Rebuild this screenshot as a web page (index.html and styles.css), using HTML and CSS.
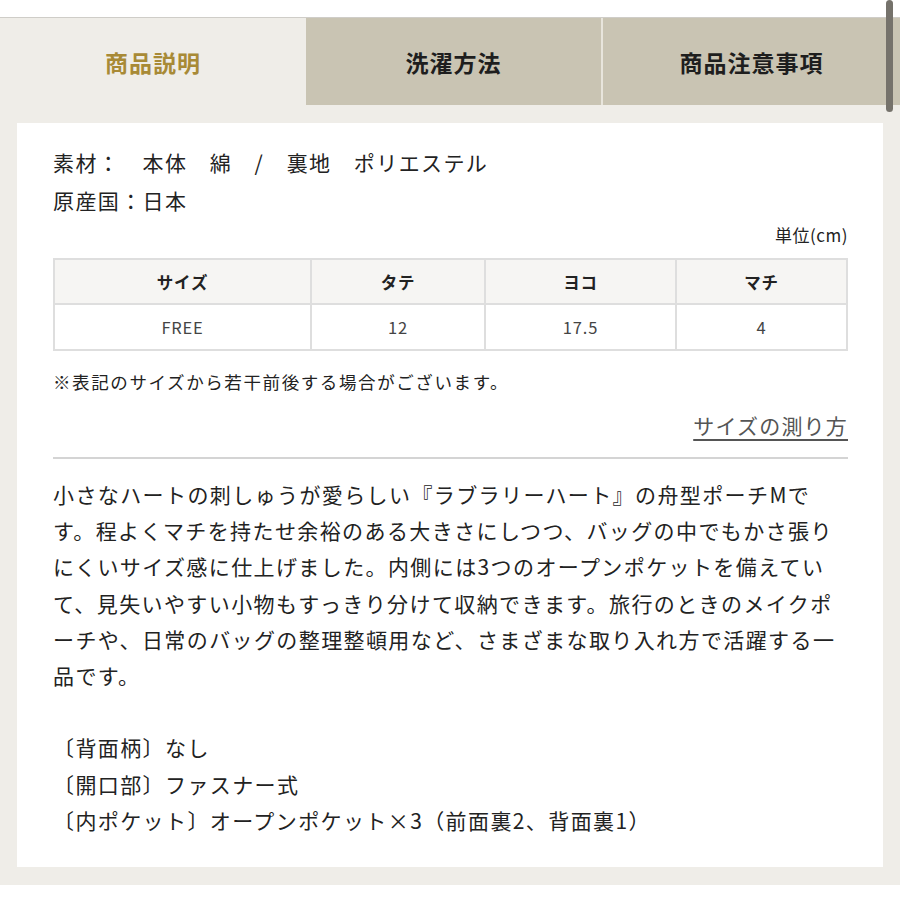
FILE: index.html
```html
<!DOCTYPE html>
<html lang="ja">
<head>
<meta charset="utf-8">
<title>商品説明</title>
<link rel="stylesheet" href="styles.css">
</head>
<body>
<div class="page">
  <div class="panel">
    <div class="tabs">
      <div class="tab tab-active">商品説明</div>
      <div class="tab">洗濯方法</div>
      <div class="tab tab-last">商品注意事項</div>
    </div>
    <div class="card">
      <div class="spec">
        <p>素材：　本体　綿　/　裏地　ポリエステル</p>
        <p>原産国：日本</p>
      </div>
      <p class="unit">単位(cm)</p>
      <table class="size-table">
        <thead>
          <tr><th class="c1">サイズ</th><th class="c2">タテ</th><th class="c3">ヨコ</th><th class="c4">マチ</th></tr>
        </thead>
        <tbody>
          <tr><td>FREE</td><td>12</td><td>17.5</td><td>4</td></tr>
        </tbody>
      </table>
      <p class="note">※表記のサイズから若干前後する場合がございます。</p>
      <div class="link-row"><a class="measure" href="#">サイズの測り方</a></div>
      <hr class="divider">
      <p class="desc">小さなハートの刺しゅうが愛らしい『ラブラリーハート』の舟型ポーチMで<br>す。程よくマチを持たせ余裕のある大きさにしつつ、バッグの中でもかさ張り<br>にくいサイズ感に仕上げました。内側には3つのオープンポケットを備えてい<br>て、見失いやすい小物もすっきり分けて収納できます。旅行のときのメイクポ<br>ーチや、日常のバッグの整理整頓用など、さまざまな取り入れ方で活躍する一<br>品です。<br><br>〔背面柄〕なし<br>〔開口部〕ファスナー式<br>〔内ポケット〕オープンポケット×3（前面裏2、背面裏1）</p>
    </div>
  </div>
  <div class="scrollbar"></div>
</div>
</body>
</html>
```

FILE: styles.css
```css
* { box-sizing: border-box; }
html, body {
  margin: 0;
  padding: 0;
  background: #ffffff;
}
body {
  font-family: "Noto Sans CJK JP", "Noto Sans", sans-serif;
  color: #222222;
}
p { margin: 0; }

.page {
  position: relative;
  width: 900px;
  padding-top: 17px;
}
.panel {
  background: #efede8;
  border-top: 1px solid #cfcdc8;
  padding-bottom: 18px;
}
.tabs {
  display: grid;
  grid-template-columns: 306px 295px 1fr;
  height: 87px;
}
.tab {
  display: flex;
  align-items: center;
  justify-content: center;
  background: #c9c4b3;
  font-size: 23px;
  font-weight: 700;
  letter-spacing: 1px;
  color: #1e1e1e;
}
.tab-active {
  background: #efede8;
  color: #a88a36;
}
.tab-last {
  border-left: 2px solid #e8e5dc;
}

.card {
  background: #ffffff;
  margin: 18px 17px 0 17px;
  padding: 20px 35px 29px 36px;
}
.spec p {
  font-size: 21px;
  line-height: 38px;
  letter-spacing: 1.4px;
}
.unit {
  text-align: right;
  font-size: 17px;
  line-height: 24px;
  margin-top: 4px;
  letter-spacing: 0.5px;
}
.size-table {
  width: 100%;
  margin-top: 11px;
  border-collapse: collapse;
  border: 2px solid #dedede;
}
.size-table th, .size-table td {
  border: 2px solid #dedede;
  text-align: center;
  font-size: 16px;
  letter-spacing: 0.8px;
}
.size-table th {
  background: #f6f5f3;
  font-weight: 700;
  height: 45px;
  color: #222;
  font-size: 16.5px;
}
.size-table td {
  height: 46px;
  color: #444;
  font-size: 16.5px;
}
.c1 { width: 257px; }
.c2 { width: 174px; }
.c3 { width: 191px; }

.note {
  margin-top: 18px;
  font-size: 17.5px;
  line-height: 26px;
  letter-spacing: 1.6px;
}
.link-row {
  margin-top: 15px;
  text-align: right;
  line-height: 30px;
}
.measure {
  font-size: 21px;
  letter-spacing: 1.2px;
  color: #555555;
  text-decoration: underline;
  text-decoration-thickness: 2px;
  text-underline-offset: 5px;
}
.divider {
  margin: 15px 0 0 0;
  border: 0;
  height: 2px;
  background: #d4d4d4;
}
.desc {
  margin-top: 17px;
  font-size: 21px;
  line-height: 36.2px;
  letter-spacing: 1.4px;
  white-space: nowrap;
}

.scrollbar {
  position: absolute;
  top: 0;
  left: 886px;
  width: 7px;
  height: 112px;
  border-radius: 4px;
  background: #75726b;
}
```
